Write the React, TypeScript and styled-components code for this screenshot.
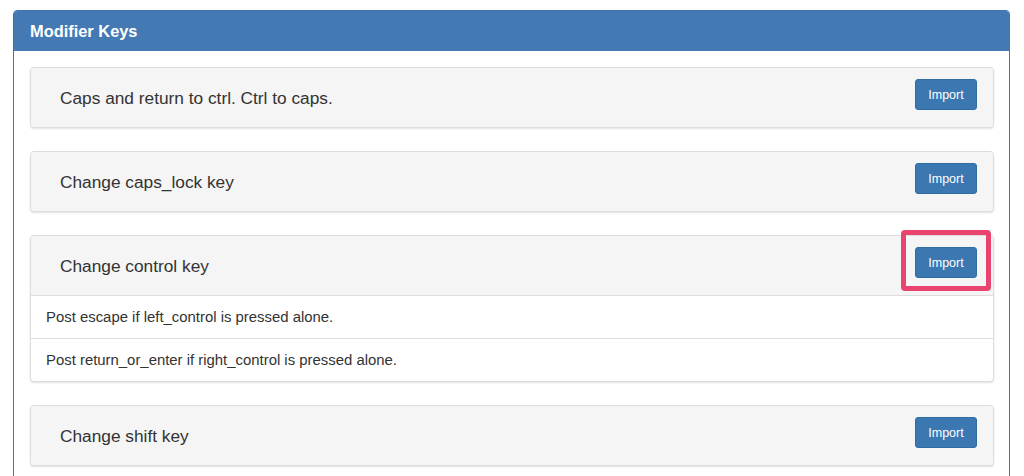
import React from "react";
import styled, { createGlobalStyle } from "styled-components";

const GlobalStyle = createGlobalStyle`
  html, body {
    margin: 0;
    padding: 0;
    background: #ffffff;
    font-family: "Liberation Sans", Arial, sans-serif;
    color: #333333;
  }
`;

interface Rule {
  title: string;
  items?: string[];
  highlighted?: boolean;
}

const rules: Rule[] = [
  { title: "Caps and return to ctrl. Ctrl to caps." },
  { title: "Change caps_lock key" },
  {
    title: "Change control key",
    highlighted: true,
    items: [
      "Post escape if left_control is pressed alone.",
      "Post return_or_enter if right_control is pressed alone.",
    ],
  },
  { title: "Change shift key" },
];

const Page = styled.div`
  padding: 10px 14px 0 13px;
  height: 476px;
  overflow: hidden;
  box-sizing: border-box;
`;

const Panel = styled.section`
  border: 1px solid #3f76b1;
  border-radius: 4px 4px 0 0;
  background: #ffffff;
`;

const PanelHeading = styled.h2`
  margin: 0;
  height: 40px;
  padding: 0 16px;
  display: flex;
  align-items: center;
  background: #4479b4;
  color: #ffffff;
  font-size: 16.4px;
  font-weight: bold;
  border-radius: 3px 3px 0 0;
`;

const PanelBody = styled.div`
  padding: 16px 15px 30px 16px;
  display: flex;
  flex-direction: column;
  gap: 23px;
`;

const Card = styled.div`
  border: 1px solid #dddddd;
  border-radius: 4px;
  background: #ffffff;
  box-shadow: 0 1px 2px rgba(0, 0, 0, 0.12);
`;

const CardHeading = styled.div<{ $open: boolean }>`
  height: 59px;
  display: flex;
  justify-content: space-between;
  padding: 0 16px 0 29px;
  background: #f5f5f5;
  border-bottom: ${(p) => (p.$open ? "1px solid #dddddd" : "none")};
  border-radius: ${(p) => (p.$open ? "3px 3px 0 0" : "3px")};
`;

const CardTitle = styled.h3`
  margin: 0;
  align-self: center;
  font-size: 17.3px;
  font-weight: normal;
  color: #333333;
  padding-top: 2px;
`;

const ButtonWrap = styled.div`
  position: relative;
  margin-top: 11px;
  align-self: flex-start;
`;

const ImportButton = styled.button`
  width: 62px;
  height: 31px;
  padding: 0;
  border: 1px solid #2e6da4;
  border-radius: 3px;
  background: #3b77b1;
  color: #ffffff;
  font-family: "Liberation Sans", Arial, sans-serif;
  font-size: 12.5px;
  cursor: pointer;
`;

const Highlight = styled.div`
  position: absolute;
  top: -17px;
  left: -14px;
  right: -14px;
  bottom: -13px;
  border: 5px solid #e9446f;
  border-radius: 4px;
  pointer-events: none;
`;

const Item = styled.div`
  height: 42px;
  display: flex;
  align-items: center;
  padding: 0 15px;
  font-size: 14.9px;
  color: #333333;
  & + & {
    border-top: 1px solid #dddddd;
  }
`;

export default function App() {
  return (
    <Page>
      <GlobalStyle />
      <Panel>
        <PanelHeading>Modifier Keys</PanelHeading>
        <PanelBody>
          {rules.map((rule) => (
            <Card key={rule.title}>
              <CardHeading $open={!!rule.items}>
                <CardTitle>{rule.title}</CardTitle>
                <ButtonWrap>
                  <ImportButton>Import</ImportButton>
                  {rule.highlighted && <Highlight />}
                </ButtonWrap>
              </CardHeading>
              {rule.items?.map((item) => (
                <Item key={item}>{item}</Item>
              ))}
            </Card>
          ))}
        </PanelBody>
      </Panel>
    </Page>
  );
}
